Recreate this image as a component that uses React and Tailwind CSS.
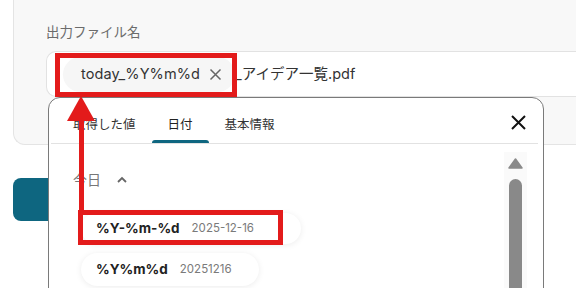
import React from "react";

const font = { fontFamily: 'Inter, "Noto Sans CJK JP", sans-serif' };

const DateItem = ({ format, sample, className = "" }) => (
  <div
    className={`flex items-center gap-[12px] rounded-full bg-white pl-[15px] shadow-[0_1px_6px_rgba(0,0,0,0.08)] ${className}`}
  >
    <span className="text-[13.5px] font-bold text-[#222]">{format}</span>
    <span className="text-[11.5px] text-[#7a7a7a]">{sample}</span>
  </div>
);

const App = () => {
  return (
    <div className="relative w-[576px] h-[288px] overflow-hidden bg-white" style={font}>
      {/* settings card */}
      <div className="ml-[13px] h-[145px] rounded-bl-xl border-b border-l border-[#e4e4e4] bg-[#f8f8f8] pl-[32px] pt-[22px]">
        <p className="text-[13.5px] leading-[20px] text-[#6b6b6b]">出力ファイル名</p>
        <div className="mt-[9px] flex h-[46px] items-center rounded-l-[10px] border border-r-0 border-[#e2e2e2] bg-white pl-[16px]">
          <div className="flex h-[35px] items-center gap-[9px] rounded-full bg-[#f6f6f6] pl-[18px] pr-[13px]">
            <span className="text-[14.5px] tracking-[0.1px] text-[#333]">today_%Y%m%d</span>
            <svg width="13" height="13" viewBox="0 0 13 13" stroke="#666" strokeWidth="1.5">
              <path d="M1.5 1.5l10 10M11.5 1.5l-10 10" />
            </svg>
          </div>
          <span className="text-[14.5px] text-[#333]">_アイデア一覧.pdf</span>
        </div>
      </div>

      {/* run button */}
      <div className="ml-[13px] mt-[33px] h-[43px] w-[90px] rounded-lg bg-[#0e6680]" />

      {/* popover */}
      <div className="absolute left-[48px] top-[97px] h-[210px] w-[496px] rounded-t-xl border border-[#7a7a7a] bg-white">
        <div className="flex h-[45px] items-stretch pl-[8px]">
          <div className="flex items-center px-[16px] pt-[9px] text-[12.5px] text-[#333]">取得した値</div>
          <div className="relative flex items-center px-[16px] pt-[9px] text-[12.5px] text-[#222]">
            日付
            <span className="absolute bottom-0 left-0 h-[3px] w-full rounded-t-sm bg-[#0e6680]" />
          </div>
          <div className="flex items-center px-[16px] pt-[9px] text-[12.5px] text-[#333]">基本情報</div>
          <svg className="ml-auto mr-[17px] mt-[17px]" width="15" height="15" viewBox="0 0 15 15" stroke="#111" strokeWidth="2">
            <path d="M1 1l13 13M14 1L1 14" />
          </svg>
        </div>
        <div className="ml-[2px] mr-[5px] h-px bg-[#e2e2e2]" />

        <div className="flex">
          <div className="flex-1 pl-[24px] pt-[25px]">
            <div className="flex items-center gap-[16px] text-[14px] text-[#777]">
              今日
              <svg width="10" height="7" viewBox="0 0 10 7" fill="none" stroke="#666" strokeWidth="1.8">
                <path d="M1 6l4-4 4 4" />
              </svg>
            </div>
            <div className="mt-[23px] flex flex-col gap-[9px] pl-[8px]">
              <DateItem format="%Y-%m-%d" sample="2025-12-16" className="h-[31px] w-[220px]" />
              <DateItem format="%Y%m%d" sample="20251216" className="h-[33px] w-[178px]" />
            </div>
          </div>
          <div className="mr-[16px] mt-[8px] flex w-[23px] flex-col items-center bg-[#fafafa] pt-[6px]">
            <svg width="15" height="11" viewBox="0 0 15 11">
              <path d="M7.5 1L14 10H1z" fill="#8a8a8a" strokeLinejoin="round" stroke="#8a8a8a" strokeWidth="1.5" />
            </svg>
            <div className="mt-[10px] h-[140px] w-[13px] rounded-t-full bg-[#898989]" />
          </div>
        </div>
      </div>

      {/* annotations */}
      <div className="absolute left-[55px] top-[53px] h-[44px] w-[182px] border-[5px] border-[#e31b1b]" />
      <div className="absolute left-[78px] top-[210px] h-[35px] w-[205px] border-[5px] border-[#e31b1b]" />
      <svg className="absolute left-[64px] top-[94px]" width="34" height="120" viewBox="0 0 34 120">
        <path d="M17 2L31 27H3z" fill="#e31b1b" />
        <rect x="15" y="25" width="5" height="93" fill="#e31b1b" />
      </svg>
    </div>
  );
};

export default App;
